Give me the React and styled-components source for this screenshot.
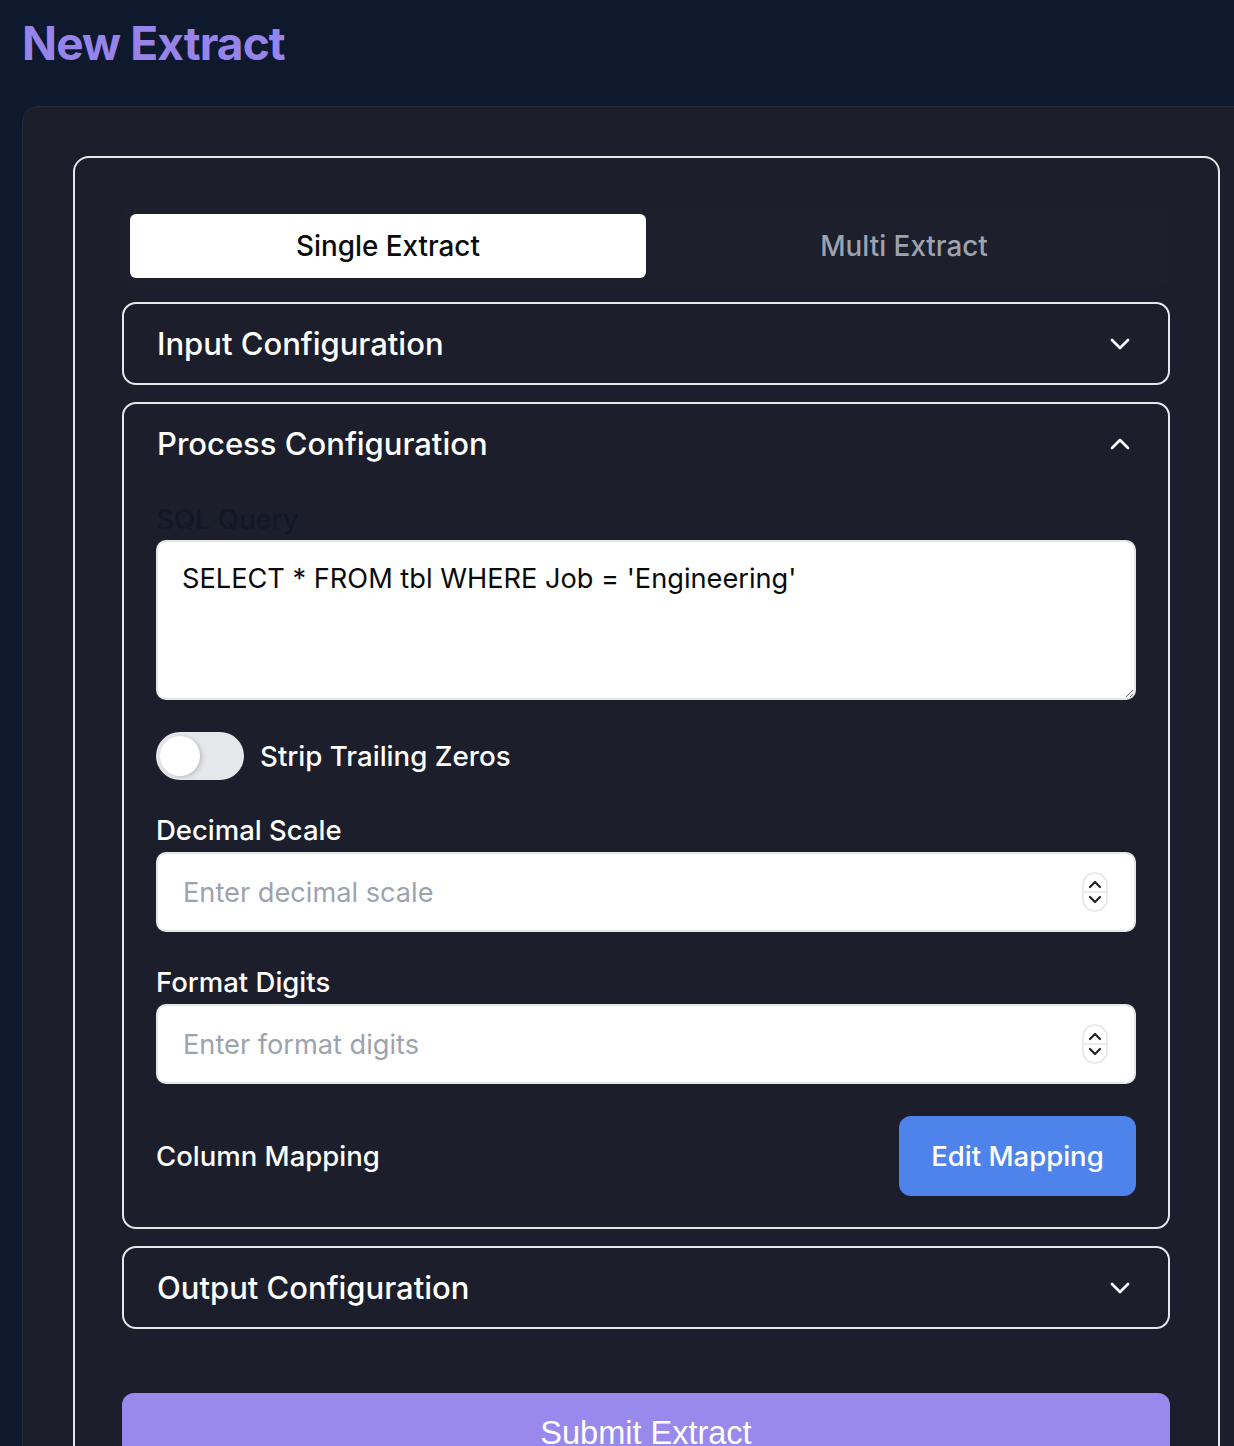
import React, { useState } from "react";
import styled, { createGlobalStyle } from "styled-components";
import { ChevronDown, ChevronUp } from "lucide-react";

const GlobalStyle = createGlobalStyle`
  html, body {
    margin: 0;
    padding: 0;
    background: #0e192e;
    overflow: hidden;
  }
  * {
    box-sizing: border-box;
  }
  body {
    font-family: Inter, "Noto Sans", sans-serif;
    color: #ffffff;
  }
`;

const Page = styled.div`
  padding: 14px 0 0 22px;
  width: 1300px;
`;

const Title = styled.h1`
  margin: 0 0 34px;
  font-size: 46px;
  line-height: 58px;
  font-weight: 700;
  color: #9784ea;
  letter-spacing: -0.9px;
`;

const OuterCard = styled.div`
  width: 1249px;
  background: #1c1f2b;
  border: 1px solid #262a37;
  border-radius: 16px;
  padding: 49px 50px 40px;
`;

const InnerCard = styled.div`
  border: 2px solid #e5e7eb;
  border-radius: 16px;
  padding: 48px 48px 48px 47px;
`;

const TabList = styled.div`
  display: grid;
  grid-template-columns: 1fr 1fr;
  padding: 8px;
  height: 80px;
  background: #1d202c;
  border-radius: 8px;
  margin-bottom: 16px;
`;

const Tab = styled.button`
  border: none;
  border-radius: 6px;
  font-family: Inter, sans-serif;
  font-size: 27.8px;
  font-weight: 500;
  cursor: pointer;
  background: ${({ $active }) => ($active ? "#ffffff" : "transparent")};
  color: ${({ $active }) => ($active ? "#0a0a0a" : "#9ca3af")};
`;

const Sections = styled.div`
  display: flex;
  flex-direction: column;
  gap: 17px;
`;

const Item = styled.div`
  border: 2px solid #e5e7eb;
  border-radius: 14px;
`;

const ItemHeader = styled.button`
  width: 100%;
  height: 79px;
  display: flex;
  align-items: center;
  justify-content: space-between;
  padding: 0 32px 0 33px;
  background: transparent;
  border: none;
  color: #ffffff;
  cursor: pointer;
  font-family: Inter, sans-serif;
  font-size: 31px;
  font-weight: 500;
`;

const ItemBody = styled.div`
  padding: 18px 32px 31px;
  display: flex;
  flex-direction: column;
  gap: 32px;
`;

const Field = styled.div`
  display: flex;
  flex-direction: column;
  gap: ${({ $gap }) => $gap || 4}px;
`;

const Label = styled.label`
  font-size: 27.5px;
  line-height: 36px;
  font-weight: 500;
  color: ${({ $muted }) => ($muted ? "#111827" : "#ffffff")};
`;

const TextArea = styled.textarea`
  height: 160px;
  resize: vertical;
  border: 2px solid #e5e7eb;
  border-radius: 10px;
  background: #ffffff;
  padding: 19px 24px 15px;
  font-family: Inter, sans-serif;
  font-size: 27.2px;
  line-height: 36px;
  color: #0a0a0a;
  outline: none;
`;

const ToggleRow = styled.div`
  display: flex;
  align-items: center;
  gap: 16px;
  font-size: 27.7px;
  font-weight: 500;
`;

const Track = styled.button`
  position: relative;
  width: 88px;
  height: 48px;
  border-radius: 24px;
  border: none;
  padding: 0;
  cursor: pointer;
  background: ${({ $on }) => ($on ? "#9784ea" : "#e5e7eb")};
`;

const Thumb = styled.span`
  position: absolute;
  top: 4px;
  left: ${({ $on }) => ($on ? "44px" : "4px")};
  width: 40px;
  height: 40px;
  border-radius: 50%;
  background: #ffffff;
  box-shadow: 2px 1px 4px rgba(0, 0, 0, 0.18);
`;

const InputWrap = styled.div`
  position: relative;
`;

const NumberInput = styled.input`
  width: 100%;
  height: 80px;
  border: 2px solid #e5e7eb;
  border-radius: 10px;
  background: #ffffff;
  padding: 0 60px 0 25px;
  font-family: Inter, sans-serif;
  font-size: 27.2px;
  color: #0a0a0a;
  outline: none;
  -moz-appearance: textfield;
  &::placeholder {
    color: #9ca3af;
  }
  &::-webkit-inner-spin-button,
  &::-webkit-outer-spin-button {
    -webkit-appearance: none;
    margin: 0;
  }
`;

const Spinner = styled.svg`
  position: absolute;
  right: 28px;
  top: 50%;
  transform: translateY(-50%);
  pointer-events: none;
`;

const MappingRow = styled.div`
  display: flex;
  align-items: center;
  justify-content: space-between;
  font-size: 27.5px;
  font-weight: 500;
`;

const BlueButton = styled.button`
  height: 80px;
  width: 237px;
  border: none;
  border-radius: 12px;
  background: #4f83ec;
  color: #ffffff;
  font-family: Inter, sans-serif;
  font-size: 27.5px;
  font-weight: 500;
  cursor: pointer;
`;

const SubmitButton = styled.button`
  margin-top: 64px;
  width: 100%;
  height: 80px;
  border: none;
  border-radius: 12px;
  background: #9a89ec;
  color: #ffffff;
  font-family: "Liberation Sans", Arial, sans-serif;
  font-size: 32.5px;
  cursor: pointer;
  padding-top: 2px;
`;

const SpinIcon = () => (
  <Spinner width="26" height="40" viewBox="0 0 26 40">
    <rect x="1" y="1" width="24" height="38" rx="12" fill="#ffffff" stroke="#e2e4e8" strokeWidth="1.5" />
    <line x1="1" y1="20" x2="25" y2="20" stroke="#e2e4e8" strokeWidth="1.5" />
    <path d="M8 15 L13 10 L18 15" fill="none" stroke="#222" strokeWidth="2.2" strokeLinecap="round" strokeLinejoin="round" />
    <path d="M8 25 L13 30 L18 25" fill="none" stroke="#222" strokeWidth="2.2" strokeLinecap="round" strokeLinejoin="round" />
  </Spinner>
);

const Section = ({ title, open, onToggle, children }) => (
  <Item>
    <ItemHeader onClick={onToggle}>
      <span>{title}</span>
      {open ? <ChevronUp size={32} strokeWidth={2} /> : <ChevronDown size={32} strokeWidth={2} />}
    </ItemHeader>
    {open && <ItemBody>{children}</ItemBody>}
  </Item>
);

export default function App() {
  const [tab, setTab] = useState("single");
  const [open, setOpen] = useState("process");
  const [strip, setStrip] = useState(false);
  const [sql, setSql] = useState("SELECT * FROM tbl WHERE Job = 'Engineering'");

  const toggle = (name) => setOpen(open === name ? null : name);

  return (
    <Page>
      <GlobalStyle />
      <Title>New Extract</Title>
      <OuterCard>
        <InnerCard>
          <TabList>
            <Tab $active={tab === "single"} onClick={() => setTab("single")}>
              Single Extract
            </Tab>
            <Tab $active={tab === "multi"} onClick={() => setTab("multi")}>
              Multi Extract
            </Tab>
          </TabList>
          <Sections>
            <Section title="Input Configuration" open={open === "input"} onToggle={() => toggle("input")}>
              <Field>
                <Label>Source</Label>
              </Field>
            </Section>
            <Section title="Process Configuration" open={open === "process"} onToggle={() => toggle("process")}>
              <Field $gap={3}>
                <Label $muted>SQL Query</Label>
                <TextArea value={sql} onChange={(e) => setSql(e.target.value)} />
              </Field>
              <ToggleRow>
                <Track $on={strip} onClick={() => setStrip(!strip)}>
                  <Thumb $on={strip} />
                </Track>
                <span>Strip Trailing Zeros</span>
              </ToggleRow>
              <Field>
                <Label>Decimal Scale</Label>
                <InputWrap>
                  <NumberInput type="number" placeholder="Enter decimal scale" />
                  <SpinIcon />
                </InputWrap>
              </Field>
              <Field>
                <Label>Format Digits</Label>
                <InputWrap>
                  <NumberInput type="number" placeholder="Enter format digits" />
                  <SpinIcon />
                </InputWrap>
              </Field>
              <MappingRow>
                <span>Column Mapping</span>
                <BlueButton>Edit Mapping</BlueButton>
              </MappingRow>
            </Section>
            <Section title="Output Configuration" open={open === "output"} onToggle={() => toggle("output")}>
              <Field>
                <Label>Destination</Label>
              </Field>
            </Section>
          </Sections>
          <SubmitButton>Submit Extract</SubmitButton>
        </InnerCard>
      </OuterCard>
    </Page>
  );
}
